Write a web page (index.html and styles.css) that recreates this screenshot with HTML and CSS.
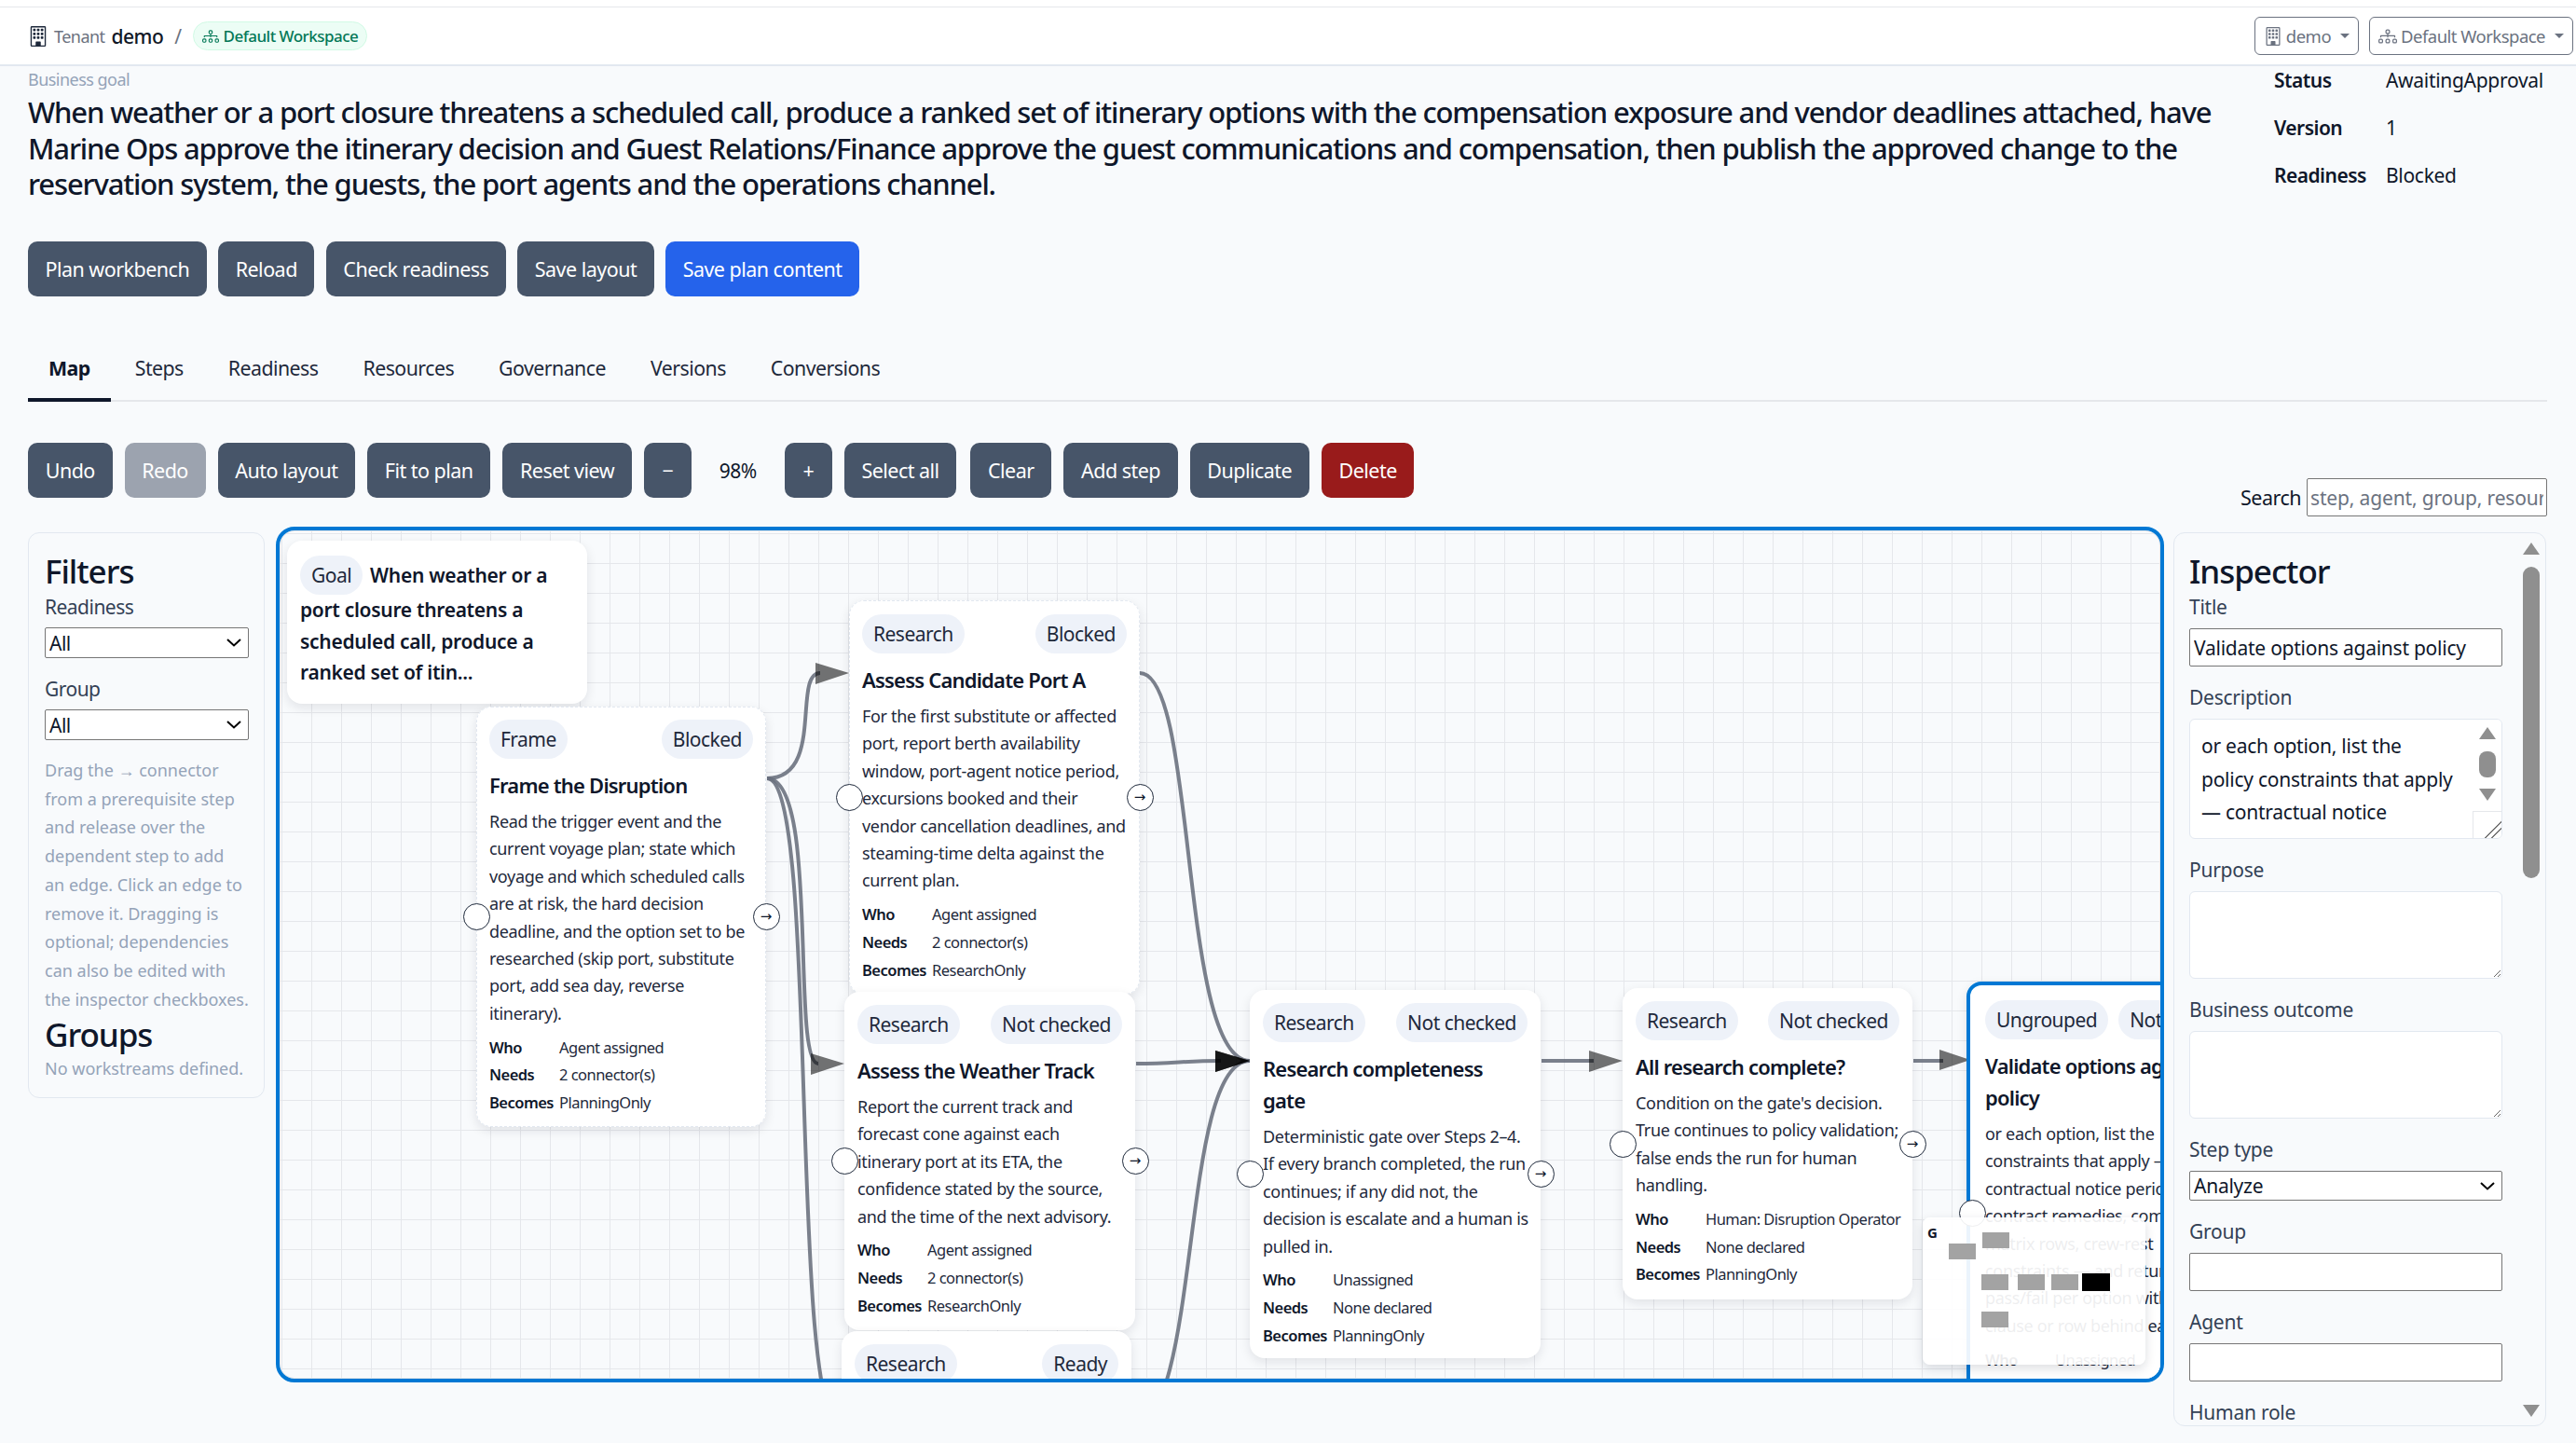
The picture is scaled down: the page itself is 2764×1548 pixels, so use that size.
FILE: index.html
```html
<!DOCTYPE html>
<html lang="en">
<head>
<meta charset="utf-8">
<title>Plan map</title>
<link rel="stylesheet" href="styles.css">
</head>
<body>
<svg class="defs" width="0" height="0" aria-hidden="true">
  <symbol id="i-building" viewBox="0 0 16 16">
    <path d="M4 2.5a.5.5 0 0 1 .5-.5h1a.5.5 0 0 1 .5.5v1a.5.5 0 0 1-.5.5h-1a.5.5 0 0 1-.5-.5zm3 0a.5.5 0 0 1 .5-.5h1a.5.5 0 0 1 .5.5v1a.5.5 0 0 1-.5.5h-1a.5.5 0 0 1-.5-.5zm3.5-.5a.5.5 0 0 0-.5.5v1a.5.5 0 0 0 .5.5h1a.5.5 0 0 0 .5-.5v-1a.5.5 0 0 0-.5-.5zM4 5.5a.5.5 0 0 1 .5-.5h1a.5.5 0 0 1 .5.5v1a.5.5 0 0 1-.5.5h-1a.5.5 0 0 1-.5-.5zM7.5 5a.5.5 0 0 0-.5.5v1a.5.5 0 0 0 .5.5h1a.5.5 0 0 0 .5-.5v-1a.5.5 0 0 0-.5-.5zm2.5.5a.5.5 0 0 1 .5-.5h1a.5.5 0 0 1 .5.5v1a.5.5 0 0 1-.5.5h-1a.5.5 0 0 1-.5-.5zM4.5 8a.5.5 0 0 0-.5.5v1a.5.5 0 0 0 .5.5h1a.5.5 0 0 0 .5-.5v-1a.5.5 0 0 0-.5-.5zm2.5.5a.5.5 0 0 1 .5-.5h1a.5.5 0 0 1 .5.5v1a.5.5 0 0 1-.5.5h-1a.5.5 0 0 1-.5-.5zm3.5-.5a.5.5 0 0 0-.5.5v1a.5.5 0 0 0 .5.5h1a.5.5 0 0 0 .5-.5v-1a.5.5 0 0 0-.5-.5z"/>
    <path fill-rule="evenodd" d="M2 1a1 1 0 0 1 1-1h10a1 1 0 0 1 1 1v14a1 1 0 0 1-1 1H3a1 1 0 0 1-1-1zm11 0H3v14h3v-2.5a.5.5 0 0 1 .5-.5h3a.5.5 0 0 1 .5.5V15h3z"/>
  </symbol>
  <symbol id="i-diagram" viewBox="0 0 16 16">
    <path fill-rule="evenodd" d="M6 3.5A1.5 1.5 0 0 1 7.5 2h1A1.5 1.5 0 0 1 10 3.5v1A1.5 1.5 0 0 1 8.5 6v1H14a.5.5 0 0 1 .5.5v1a.5.5 0 0 1-1 0V8h-5v.5a.5.5 0 0 1-1 0V8h-5v.5a.5.5 0 0 1-1 0v-1A.5.5 0 0 1 2 7h5.5V6A1.5 1.5 0 0 1 6 4.5zM8.5 5a.5.5 0 0 0 .5-.5v-1a.5.5 0 0 0-.5-.5h-1a.5.5 0 0 0-.5.5v1a.5.5 0 0 0 .5.5zM0 11.5A1.5 1.5 0 0 1 1.5 10h1A1.5 1.5 0 0 1 4 11.5v1A1.5 1.5 0 0 1 2.5 14h-1A1.5 1.5 0 0 1 0 12.5zm1.5-.5a.5.5 0 0 0-.5.5v1a.5.5 0 0 0 .5.5h1a.5.5 0 0 0 .5-.5v-1a.5.5 0 0 0-.5-.5zm4.5.5A1.5 1.5 0 0 1 7.5 10h1a1.5 1.5 0 0 1 1.5 1.5v1A1.5 1.5 0 0 1 8.5 14h-1A1.5 1.5 0 0 1 6 12.5zm1.5-.5a.5.5 0 0 0-.5.5v1a.5.5 0 0 0 .5.5h1a.5.5 0 0 0 .5-.5v-1a.5.5 0 0 0-.5-.5zm4.5.5a1.5 1.5 0 0 1 1.5-1.5h1a1.5 1.5 0 0 1 1.5 1.5v1a1.5 1.5 0 0 1-1.5 1.5h-1a1.5 1.5 0 0 1-1.5-1.5zm1.5-.5a.5.5 0 0 0-.5.5v1a.5.5 0 0 0 .5.5h1a.5.5 0 0 0 .5-.5v-1a.5.5 0 0 0-.5-.5z"/>
  </symbol>
</svg>

<header class="topbar">
  <div class="crumbs">
    <svg class="ic-building"><use href="#i-building"/></svg>
    <span class="crumb-label">Tenant</span>
    <span class="crumb-value">demo</span>
    <span class="crumb-sep">/</span>
    <span class="ws-chip"><svg class="ic-small"><use href="#i-diagram"/></svg>Default Workspace</span>
  </div>
  <div class="switchers">
    <button class="switcher"><svg class="ic-switch"><use href="#i-building"/></svg>demo<span class="caret"></span></button>
    <button class="switcher"><svg class="ic-switch"><use href="#i-diagram"/></svg>Default Workspace<span class="caret"></span></button>
  </div>
</header>

<main class="page">
  <section class="goal">
    <div class="goal-text">
      <div class="goal-label">Business goal</div>
      <h1>When weather or a port closure threatens a scheduled call, produce a ranked set of itinerary options with the compensation exposure and vendor deadlines attached, have<br>Marine Ops approve the itinerary decision and Guest Relations/Finance approve the guest communications and compensation, then publish the approved change to the<br>reservation system, the guests, the port agents and the operations channel.</h1>
    </div>
    <dl class="facts">
      <dt>Status</dt><dd>AwaitingApproval</dd>
      <dt>Version</dt><dd>1</dd>
      <dt>Readiness</dt><dd>Blocked</dd>
    </dl>
  </section>

  <div class="actions">
    <button class="btn">Plan workbench</button>
    <button class="btn">Reload</button>
    <button class="btn">Check readiness</button>
    <button class="btn">Save layout</button>
    <button class="btn btn-primary">Save plan content</button>
  </div>

  <nav class="tabs">
    <a class="tab tab-active">Map</a>
    <a class="tab">Steps</a>
    <a class="tab">Readiness</a>
    <a class="tab">Resources</a>
    <a class="tab">Governance</a>
    <a class="tab">Versions</a>
    <a class="tab">Conversions</a>
  </nav>

  <div class="toolrow">
    <div class="toolbar">
      <button class="btn">Undo</button>
      <button class="btn btn-disabled">Redo</button>
      <button class="btn">Auto layout</button>
      <button class="btn">Fit to plan</button>
      <button class="btn">Reset view</button>
      <button class="btn btn-sq">−</button>
      <span class="zoom">98%</span>
      <button class="btn btn-sq">+</button>
      <button class="btn">Select all</button>
      <button class="btn btn-clear">Clear</button>
      <button class="btn">Add step</button>
      <button class="btn">Duplicate</button>
      <button class="btn btn-danger">Delete</button>
    </div>
    <label class="search">Search <input type="text" placeholder="step, agent, group, resource"></label>
  </div>

  <div class="work">
    <aside class="filters">
      <h2>Filters</h2>
      <label class="flabel" for="f1">Readiness</label>
      <select id="f1" class="fselect"><option>All</option></select>
      <label class="flabel flabel-gap" for="f2">Group</label>
      <select id="f2" class="fselect"><option>All</option></select>
      <p class="help">Drag the → connector<br>from a prerequisite step<br>and release over the<br>dependent step to add<br>an edge. Click an edge to<br>remove it. Dragging is<br>optional; dependencies<br>can also be edited with<br>the inspector checkboxes.</p>
      <h2 class="groups">Groups</h2>
      <p class="help help-none">No workstreams defined.</p>
    </aside>

    <section class="canvas">
      <svg class="edges" width="2018" height="910">
        <g transform="translate(-300 -569)">
          <g class="edge-lines">
            <path d="M823 835 C885 835 850 722 880 722"/>
            <path d="M823 835 C880 835 848 1141 878 1141"/>
            <path d="M823 835 C880 835 845 1530 903 1530"/>
            <path d="M1223 722 C1285 722 1265 1138 1341 1138"/>
            <path d="M1219 1141 C1260 1141 1270 1138 1310 1138"/>
            <path d="M1214 1530 C1290 1530 1265 1138 1341 1138"/>
            <path d="M1654 1138 L1710 1138"/>
            <path d="M2053 1138 L2085 1138"/>
          </g>
          <g class="edge-heads">
            <polygon points="875,711 911,722 875,734"/>
            <polygon points="870,1130 906,1141 870,1153"/>
            <polygon points="1304,1127 1341,1138 1304,1150"/>
            <polygon points="1304,1127 1341,1138 1304,1150"/>
            <polygon points="1304,1127 1341,1138 1304,1150"/>
            <polygon points="1705,1127 1741,1138 1705,1150"/>
            <polygon points="2081,1126 2114,1137 2081,1148"/>
          </g>
        </g>
      </svg>

      <article class="node n-goal">
        <span class="chip chip-inline">Goal</span><strong class="goal-title">When weather or a<br>port closure threatens a<br>scheduled call, produce a<br>ranked set of itin...</strong>
      </article>

      <article class="node dashed n-frame">
        <span class="handle h-left"></span><span class="handle h-right">→</span>
        <div class="chips"><span class="chip">Frame</span><span class="chip">Blocked</span></div>
        <h3>Frame the Disruption</h3>
        <p class="desc">Read the trigger event and the<br>current voyage plan; state which<br>voyage and which scheduled calls<br>are at risk, the hard decision<br>deadline, and the option set to be<br>researched (skip port, substitute<br>port, add sea day, reverse<br>itinerary).</p>
        <dl class="meta"><dt>Who</dt><dd>Agent assigned</dd><dt>Needs</dt><dd>2 connector(s)</dd><dt>Becomes</dt><dd>PlanningOnly</dd></dl>
      </article>

      <article class="node dashed n-port">
        <span class="handle h-left"></span><span class="handle h-right">→</span>
        <div class="chips"><span class="chip">Research</span><span class="chip">Blocked</span></div>
        <h3>Assess Candidate Port A</h3>
        <p class="desc">For the first substitute or affected<br>port, report berth availability<br>window, port-agent notice period,<br>excursions booked and their<br>vendor cancellation deadlines, and<br>steaming-time delta against the<br>current plan.</p>
        <dl class="meta"><dt>Who</dt><dd>Agent assigned</dd><dt>Needs</dt><dd>2 connector(s)</dd><dt>Becomes</dt><dd>ResearchOnly</dd></dl>
      </article>

      <article class="node n-weather">
        <span class="handle h-left"></span><span class="handle h-right">→</span>
        <div class="chips"><span class="chip">Research</span><span class="chip">Not checked</span></div>
        <h3>Assess the Weather Track</h3>
        <p class="desc">Report the current track and<br>forecast cone against each<br>itinerary port at its ETA, the<br>confidence stated by the source,<br>and the time of the next advisory.</p>
        <dl class="meta"><dt>Who</dt><dd>Agent assigned</dd><dt>Needs</dt><dd>2 connector(s)</dd><dt>Becomes</dt><dd>ResearchOnly</dd></dl>
      </article>

      <article class="node n-ready">
        <div class="chips"><span class="chip">Research</span><span class="chip">Ready</span></div>
      </article>

      <article class="node n-gate">
        <span class="handle h-left"></span><span class="handle h-right">→</span>
        <div class="chips"><span class="chip">Research</span><span class="chip">Not checked</span></div>
        <h3>Research completeness<br>gate</h3>
        <p class="desc">Deterministic gate over Steps 2–4.<br>If every branch completed, the run<br>continues; if any did not, the<br>decision is escalate and a human is<br>pulled in.</p>
        <dl class="meta"><dt>Who</dt><dd>Unassigned</dd><dt>Needs</dt><dd>None declared</dd><dt>Becomes</dt><dd>PlanningOnly</dd></dl>
      </article>

      <article class="node n-all">
        <span class="handle h-left"></span><span class="handle h-right">→</span>
        <div class="chips"><span class="chip">Research</span><span class="chip">Not checked</span></div>
        <h3>All research complete?</h3>
        <p class="desc">Condition on the gate's decision.<br>True continues to policy validation;<br>false ends the run for human<br>handling.</p>
        <dl class="meta"><dt>Who</dt><dd>Human: Disruption Operator</dd><dt>Needs</dt><dd>None declared</dd><dt>Becomes</dt><dd>PlanningOnly</dd></dl>
      </article>

      <article class="node selected n-validate">
        <span class="handle h-left"></span>
        <div class="chips chips-wide"><span class="chip">Ungrouped</span><span class="chip">Not checked</span></div>
        <h3>Validate options against<br>policy</h3>
        <p class="desc">or each option, list the<br>constraints that apply —<br>contractual notice period,<br>contract remedies, compliance<br>matrix rows, crew-rest<br>constraints — and return<br>pass/fail per option with the<br>clause or row behind each.</p>
        <dl class="meta"><dt>Who</dt><dd>Unassigned</dd></dl>
      </article>

      <div class="minimap">
        <span class="mini-g">G</span>
        <i class="mm mm-a"></i><i class="mm mm-b"></i><i class="mm mm-c"></i><i class="mm mm-d"></i><i class="mm mm-e"></i><i class="mm mm-f"></i><i class="mm mm-g"></i>
      </div>
    </section>

    <aside class="inspector">
      <div class="insp-body">
        <h2>Inspector</h2>
        <label class="ilabel ilabel-first" for="i1">Title</label>
        <input id="i1" class="iinput" type="text" value="Validate options against policy">
        <label class="ilabel">Description</label>
        <div class="fake-area">
          <div class="fake-text">or each option, list the<br>policy constraints that apply<br>— contractual notice<br>period, contract</div>
          <div class="fake-bar"><span class="arr-up"></span><span class="fake-thumb"></span><span class="arr-down"></span><span class="fake-grip"></span></div>
        </div>
        <label class="ilabel" for="i3">Purpose</label>
        <textarea id="i3" class="iarea"></textarea>
        <label class="ilabel" for="i4">Business outcome</label>
        <textarea id="i4" class="iarea"></textarea>
        <label class="ilabel" for="i5">Step type</label>
        <select id="i5" class="iselect"><option>Analyze</option></select>
        <label class="ilabel" for="i6">Group</label>
        <input id="i6" class="iinput" type="text">
        <label class="ilabel" for="i7">Agent</label>
        <input id="i7" class="iinput" type="text">
        <label class="ilabel" for="i8">Human role</label>
        <input id="i8" class="iinput" type="text">
      </div>
      <div class="insp-bar"><span class="arr-up"></span><span class="insp-thumb"></span><span class="arr-down arr-end"></span></div>
    </aside>
  </div>
</main>
</body>
</html>
```
FILE: styles.css
```css
* { box-sizing: border-box; }
html, body { margin: 0; height: 100%; overflow: hidden; }
body {
  background: #f8fafc;
  color: #0f172a;
  font-family: "Noto Sans", "Open Sans", sans-serif;
  font-size: 21px;
  letter-spacing: -0.025em;
}
.defs { position: absolute; }
button, input, select, textarea { font-family: inherit; letter-spacing: inherit; }

.topbar {
  margin-top: 7px;
  height: 64px;
  background: #fff;
  border-top: 1px solid #e5e7eb;
  border-bottom: 2px solid #e2e8f0;
  box-shadow: 0 -7px 0 #fff;
  display: flex;
  align-items: center;
  justify-content: space-between;
  padding: 0 3px 0 30px;
}
.crumbs { display: flex; align-items: center; font-size: 21px; }
.ic-building { width: 22px; height: 22px; fill: #1e293b; margin-right: 6px; }
.crumb-label { color: #6b7280; margin-right: 7px; font-size: 18px; }
.crumb-value { color: #111827; font-weight: 500; }
.crumb-sep { color: #6b7280; margin: 0 12px; }
.ws-chip {
  display: inline-flex; align-items: center; gap: 5px;
  height: 31px; padding: 0 9px;
  background: #ecfdf5; border: 1px solid #d1fae5; border-radius: 16px;
  color: #047857; font-size: 17px; font-weight: 500;
}
.ic-small { width: 18px; height: 18px; fill: #047857; }
.switchers { display: flex; gap: 11px; }
.switcher {
  display: inline-flex; align-items: center; gap: 4px;
  height: 41px; padding: 0 9px;
  background: #fff; border: 1px solid #6b7280; border-radius: 6px;
  color: #6b7280; font-size: 18.5px;
}
.ic-switch { width: 20px; height: 20px; fill: #6b7280; }
.caret { margin-left: 6px; border-top: 5px solid #6b7280; border-left: 5px solid transparent; border-right: 5px solid transparent; }

.page { padding: 0 31px 0 30px; }

.goal { display: flex; justify-content: space-between; height: 188px; }
.goal-text { flex: 1; min-width: 0; }
.goal-label { color: #94a3b8; font-size: 18px; line-height: 24px; margin-top: 2px; }
h1 { margin: 4px 0 0; font-size: 31px; font-weight: 500; line-height: 38.5px; white-space: nowrap; color: #0f172a; letter-spacing: -1.15px; }
.facts {
  flex: none; width: 293px;
  margin: -11px 0 0; display: grid; grid-template-columns: 120px auto; grid-auto-rows: 51px;
  align-items: center; font-size: 21px; height: 153px;
  white-space: nowrap;
}
.facts dt { font-weight: 600; }
.facts dd { margin: 0; letter-spacing: -0.3px; }

.btn {
  height: 59px; padding: 0 18.5px;
  background: #475569; color: #fff; border: 0; border-radius: 10px;
  font-size: 21.5px; white-space: nowrap;
}
.btn-primary { background: #2563eb; }
.btn-disabled { background: #9ca3af; }
.btn-danger { background: #991b1b; }
.btn-sq { padding: 0; width: 51px; }
.actions { display: flex; gap: 12.5px; }

.tabs {
  display: flex; gap: 4px; margin-top: 52px; height: 61px;
  border-bottom: 2px solid #e5e7eb; align-items: stretch;
}
.tab { padding: 0 22px; line-height: 50px; font-size: 21.3px; color: #1e293b; height: 61px; }
.tab-active { font-weight: 700; color: #0f172a; border-bottom: 4px solid #0f172a; }

.toolrow { display: flex; justify-content: space-between; align-items: flex-start; margin-top: 44px; height: 90px; }
.toolbar { display: flex; gap: 13px; align-items: center; }
.toolbar .btn { padding: 0 18.7px; }
.toolbar .btn-sq { padding: 0; }
.toolbar .btn-clear { margin-left: 2px; }
.zoom { width: 74px; text-align: center; font-size: 21px; }
.search { display: flex; align-items: center; gap: 6px; margin-top: 38px; font-size: 21.5px; }
.search input { width: 258px; height: 41px; padding: 0 3px; border: 1px solid #767676; border-radius: 2px; background: #fff; font-size: 21px; letter-spacing: -0.15px; }
.search input::placeholder { color: #6b7280; }

.work { display: flex; align-items: flex-start; gap: 12px; margin-right: -21px; }

.filters {
  width: 254px; height: 607px; margin-top: 6px; padding: 20px 17px;
  border: 1px solid #e2e8f0; border-radius: 12px;
  flex: none;
}
.filters h2, .inspector h2 { margin: 0; font-size: 35px; font-weight: 500; line-height: 42px; letter-spacing: -0.03em; }
.flabel { display: block; line-height: 29px; margin-top: 3px; font-size: 21px; color: #334155; }
.flabel-gap { margin-top: 19px; }
.fselect, .iselect {
  display: block; height: 33px;
  appearance: none; -webkit-appearance: none;
  background: #fff url("data:image/svg+xml,%3Csvg xmlns='http://www.w3.org/2000/svg' width='16' height='9' viewBox='0 0 16 9'%3E%3Cpath d='M1 1l7 6.5L15 1' fill='none' stroke='%23000' stroke-width='2'/%3E%3C/svg%3E") no-repeat right 7px center;
  border: 1px solid #767676; border-radius: 2px;
  padding: 0 4px; font-size: 21px; color: #0f172a;
}
.fselect { width: 219px; margin-top: 7px; }
.help { margin: 17px 0 0; font-size: 18px; line-height: 30.7px; color: #94a3b8; white-space: nowrap; letter-spacing: 0; }
.groups { margin-top: 2px !important; }
.help-none { margin-top: 0; }

.canvas {
  position: relative; flex: none; width: 2026px; height: 918px; overflow: hidden;
  border: 4px solid #0078d4; border-radius: 20px;
  box-shadow: inset 0 0 0 1px #e5e7eb;
  background-color: #f8fafc;
  background-image:
    linear-gradient(to right, #e5e7eb 1px, transparent 1px),
    linear-gradient(to bottom, #e5e7eb 1px, transparent 1px);
  background-size: 32px 32px;
  background-position: 2px 3px;
}
.edges { position: absolute; left: 0; top: 0; }
.edge-lines path { fill: none; stroke: #6b7280; stroke-width: 4; opacity: .9; }
.edge-heads polygon { fill: #000; opacity: .55; }

.node {
  position: absolute; padding: 14px;
  background: #fff; border-radius: 16px;
  box-shadow: 0 4px 12px rgba(15, 23, 42, .1);
}
.dashed { outline: 1px dashed #e2e8f0; outline-offset: -1px; }
.selected { border: 4px solid #0078d4; padding: 16px 16px; }
.n-goal { left: 8px; top: 11px; width: 322px; height: 175px; padding-top: 16px; }
.n-frame { left: 211px; top: 189px; width: 311px; height: 451px; }
.n-port { left: 611px; top: 75px; width: 312px; height: 423px; padding-top: 15px; }
.n-weather { left: 606px; top: 495px; width: 312px; height: 363px; }
.n-ready { left: 603px; top: 859px; width: 311px; height: 300px; }
.n-gate { left: 1041px; top: 493px; width: 312px; height: 395px; }
.n-all { left: 1441px; top: 491px; width: 311px; height: 334px; }
.n-validate { left: 1810px; top: 484px; width: 311px; height: 496px; }

.chips { display: flex; justify-content: space-between; white-space: nowrap; }
.chips-wide { width: 300px; gap: 11px; justify-content: flex-start; }
.chip {
  display: inline-block; height: 42px; line-height: 42px; padding: 0 12px;
  background: #eef2f9; border-radius: 21px; font-size: 21px; color: #1e293b;
}
.chip-inline { margin-right: 8px; }
.goal-title { font-size: 21px; font-weight: 600; line-height: 33.5px; white-space: nowrap; letter-spacing: -0.3px; }
.node h3 { margin: 11px 0 0; font-size: 22px; font-weight: 600; line-height: 34px; white-space: nowrap; letter-spacing: -0.8px; }
.desc { margin: 8px 0 0; font-size: 18px; line-height: 29.4px; color: #1e293b; white-space: nowrap; letter-spacing: -0.32px; }
.meta {
  margin: 6px 0 0; display: grid; grid-template-columns: 75px auto; grid-auto-rows: 29.7px;
  align-items: center; font-size: 16.5px; white-space: nowrap;
}
.meta dt { font-weight: 600; }
.meta dd { margin: 0; color: #1e293b; }

.handle {
  position: absolute; top: 50%; width: 29px; height: 29px; margin-top: -14.5px;
  border: 1.5px solid #1e293b; border-radius: 50%; background: #fff;
  display: flex; align-items: center; justify-content: center;
  font-family: "DejaVu Sans", sans-serif; font-size: 15px; line-height: 1; letter-spacing: 0; color: #0f172a;
}
.h-left { left: -14.5px; }
.h-right { right: -14.5px; }
.n-validate .h-left { left: -12px; }

.minimap {
  position: absolute; left: 1763px; top: 737px; width: 239px; height: 158px;
  background: rgba(255, 255, 255, .92); border-radius: 8px;
  box-shadow: 0 4px 12px rgba(15, 23, 42, .14);
}
.mini-g { position: absolute; left: 5px; top: 7px; font-size: 15px; font-weight: 700; line-height: 18px; }
.mm { position: absolute; width: 29px; height: 17px; background: #a3a3a3; }
.mm-a { left: 64px; top: 16px; }
.mm-b { left: 28px; top: 28px; }
.mm-c { left: 63px; top: 61px; }
.mm-d { left: 102px; top: 61px; }
.mm-e { left: 138px; top: 61px; }
.mm-f { left: 171px; top: 60px; width: 30px; height: 19px; background: #000; }
.mm-g { left: 63px; top: 101px; }

.inspector {
  display: flex; flex: none; width: 400px; height: 959px; margin: 6px 0 0 -2px;
  border: 1px solid #e2e8f0; border-radius: 12px; overflow: hidden;
}
.insp-body { flex: 1; padding: 20px 0 0 16px; overflow: hidden; letter-spacing: -0.25px; }
.ilabel { display: block; line-height: 26px; margin-top: 20px; font-size: 21px; color: #334155; }
.ilabel-first { margin-top: 4px; }
.iinput { display: block; width: 336px; height: 41px; margin-top: 10px; padding: 0 4px; background: #fff; border: 1px solid #767676; border-radius: 2px; font-size: 21px; color: #0f172a; }
.iarea { display: block; width: 336px; height: 94px; margin-top: 10px; background: #fff; border: 1px solid #e2e8f0; border-radius: 6px; resize: vertical; }
.iselect { width: 336px; height: 32px; margin-top: 10px; }
.fake-area { display: flex; width: 336px; height: 129px; margin-top: 10px; background: #fff; border: 1px solid #e2e8f0; border-radius: 6px; overflow: hidden; }
.fake-text { flex: 1; padding: 11px 0 0 12px; font-size: 21px; line-height: 35.5px; white-space: nowrap; overflow: hidden; color: #0f172a; }
.fake-bar { flex: none; width: 31px; display: flex; flex-direction: column; align-items: center; background: #fff; padding-top: 8px; position: relative; }
.arr-up { flex: none; width: 0; height: 0; border-left: 9px solid transparent; border-right: 9px solid transparent; border-bottom: 13px solid #8f8f8f; }
.arr-down { flex: none; width: 0; height: 0; border-left: 9px solid transparent; border-right: 9px solid transparent; border-top: 13px solid #8f8f8f; }
.fake-thumb { flex: none; width: 18px; height: 28px; margin: 13px 0 12px; background: #8f8f8f; border-radius: 8px; }
.fake-grip {
  position: absolute; left: 0; bottom: 0; width: 31px; height: 29px;
  border: 1px solid #e5e7eb; border-width: 1px 0 0 1px;
  background: #fff linear-gradient(135deg, transparent 68%, #777 68% 71%, transparent 71% 80%, #777 80% 83%, transparent 83%);
}
.insp-bar { flex: none; width: 31px; display: flex; flex-direction: column; align-items: center; padding-top: 10px; }
.insp-thumb { flex: none; width: 18px; height: 334px; margin-top: 13px; background: #8f8f8f; border-radius: 9px; }
.arr-end { margin-top: 565px; }
```
